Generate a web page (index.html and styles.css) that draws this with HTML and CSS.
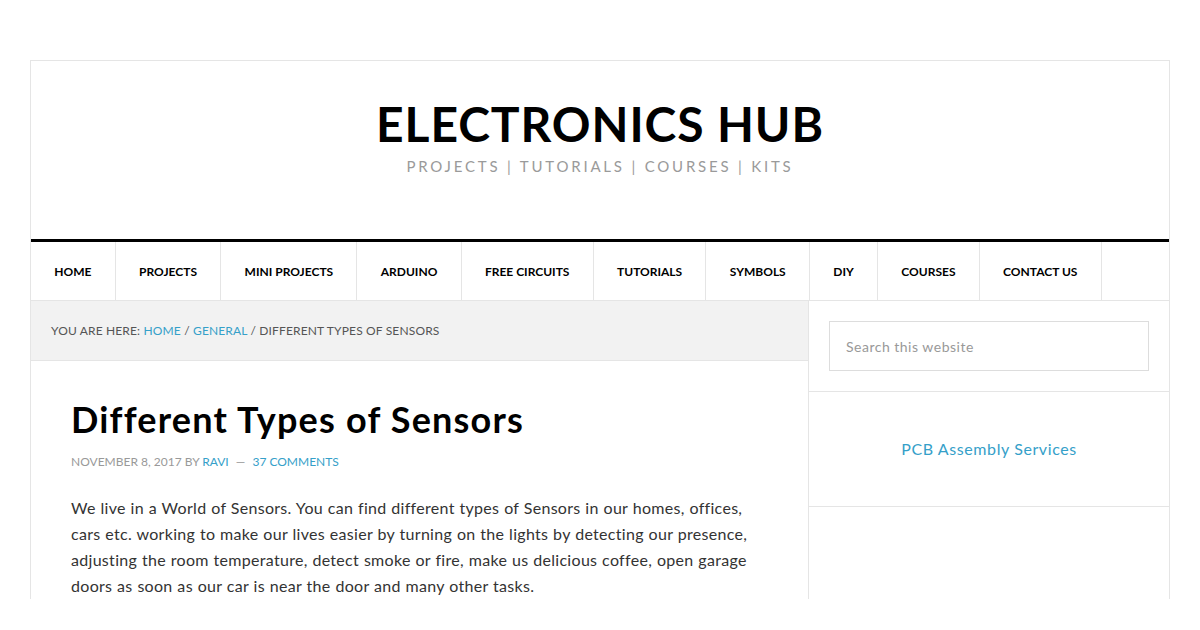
FILE: index.html
```html
<!DOCTYPE html>
<html lang="en">
  <head>
    <meta charset="UTF-8" />
    <meta name="viewport" content="width=device-width, initial-scale=1.0" />
    <link rel="stylesheet" href="styles.css">
    <title>Different Types of Sensors | Electronics Hub</title>
  </head>
  <body>
    <div class="site-container">
      <header class="site-header">
        <h1 class="site-title">ELECTRONICS HUB</h1>
        <p class="site-description">Projects | Tutorials | Courses | Kits</p>
      </header>

      <nav class="nav-primary">
        <a href="#">Home</a>
        <a href="#">Projects</a>
        <a href="#">Mini Projects</a>
        <a href="#">Arduino</a>
        <a href="#">Free Circuits</a>
        <a href="#">Tutorials</a>
        <a href="#">Symbols</a>
        <a href="#">DIY</a>
        <a href="#">Courses</a>
        <a href="#">Contact Us</a>
      </nav>

      <div class="site-inner">
        <main class="content">
          <div class="breadcrumb">
            You are here: <a href="#">Home</a> / <a href="#">General</a> / Different Types of Sensors
          </div>
          <article class="entry">
            <h2 class="entry-title">Different Types of Sensors</h2>
            <p class="entry-meta">
              November 8, 2017 by <a href="#">Ravi</a> <span class="dash">&mdash;</span> <a href="#">37 Comments</a>
            </p>
            <p class="entry-text">
              We live in a World of Sensors. You can find different types of Sensors in our homes, offices,
              cars etc. working to make our lives easier by turning on the lights by detecting our presence,
              adjusting the room temperature, detect smoke or fire, make us delicious coffee, open garage
              doors as soon as our car is near the door and many other tasks.
            </p>
          </article>
        </main>

        <aside class="sidebar">
          <section class="widget widget-search">
            <input type="search" placeholder="Search this website" />
          </section>
          <section class="widget widget-link">
            <a href="#">PCB Assembly Services</a>
          </section>
        </aside>
      </div>
    </div>
  </body>
</html>
```

FILE: styles.css
```css
*,
*::after,
*::before {
  box-sizing: border-box;
}

body {
  margin: 0;
  background-color: #fff;
  color: #222;
  font-family: Lato, "Open Sans", sans-serif;
  overflow: hidden;
}

a {
  color: #35a0c9;
  text-decoration: none;
}

.site-container {
  width: 1140px;
  margin: 60px auto 0;
  border: 1px solid #e5e5e5;
  border-bottom: none;
}

.site-header {
  height: 178px;
  padding-top: 39px;
  text-align: center;
}

.site-title {
  margin: 0;
  font-size: 48px;
  font-weight: 700;
  line-height: 1;
  letter-spacing: 0.9px;
  color: #000;
}

.site-description {
  margin: 11px 0 0;
  font-size: 15px;
  line-height: 1;
  letter-spacing: 2.8px;
  text-transform: uppercase;
  color: #9a9a9a;
}

.nav-primary {
  display: flex;
  border-top: 3px solid #000;
  border-bottom: 1px solid #e5e5e5;
}

.nav-primary a {
  display: block;
  padding: 22px 23.3px 21px;
  border-right: 1px solid #e5e5e5;
  color: #000;
  font-size: 12px;
  font-weight: 700;
  line-height: 15px;
  text-transform: uppercase;
}

.site-inner {
  display: flex;
}

.content {
  width: 778px;
  border-right: 1px solid #e5e5e5;
}

.breadcrumb {
  height: 60px;
  padding: 21px 20px;
  background-color: #f2f2f2;
  border-bottom: 1px solid #e5e5e5;
  color: #555;
  font-size: 12px;
  line-height: 17px;
  letter-spacing: 0.15px;
  text-transform: uppercase;
}

.entry {
  padding: 36px 40px 0;
}

.entry-title {
  margin: 0;
  color: #000;
  font-size: 36px;
  font-weight: 700;
  line-height: 44px;
  letter-spacing: 1.2px;
}

.entry-meta {
  margin: 12px 0 0;
  color: #999;
  font-size: 12px;
  line-height: 18px;
  text-transform: uppercase;
}

.entry-meta .dash {
  margin: 0 4px;
}

.entry-text {
  margin: 24px 0 0;
  color: #333;
  font-size: 16px;
  line-height: 26px;
  letter-spacing: 0.3px;
  word-spacing: 0.4px;
}

.sidebar {
  flex: 1;
}

.widget {
  border-bottom: 1px solid #e5e5e5;
}

.widget-search {
  padding: 20px;
}

.widget-search input {
  display: block;
  width: 100%;
  height: 50px;
  padding: 0 16px;
  border: 1px solid #ddd;
  font-family: inherit;
  font-size: 14px;
  letter-spacing: 0.5px;
  color: #333;
  outline: none;
}

.widget-search input::placeholder {
  color: #999;
}

.widget-link {
  padding: 44px 20px;
  text-align: center;
  font-size: 16px;
  line-height: 26px;
  letter-spacing: 0.6px;
}
```
